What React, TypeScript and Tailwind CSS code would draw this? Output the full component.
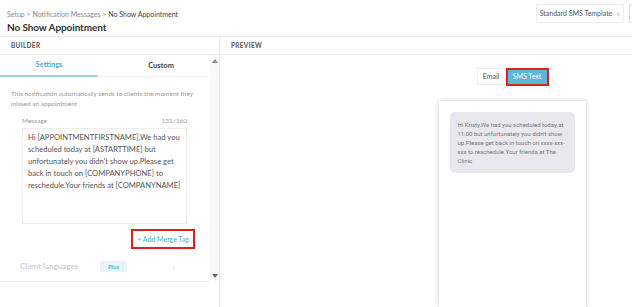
import React from "react";

export default function App() {
  return (
    <div className="w-[632px] h-[307px] overflow-hidden bg-white flex flex-col" style={{ fontFamily: "Lato, 'Open Sans', sans-serif" }}>
      {/* top */}
      <div className="h-[37px] flex justify-between border-b border-[#ececec] shrink-0">
        <div className="pl-[7px] pt-[10px]">
          <div className="text-[7px] leading-[9px] text-[#8a8a8a]">
            Setup &gt; Notification Messages &gt; <span className="text-[#444]">No Show Appointment</span>
          </div>
          <div className="text-[10px] leading-[14px] font-bold text-[#333] mt-[1px] tracking-[-0.1px]">No Show Appointment</div>
        </div>
        <div className="flex items-start pt-[4px] gap-[5px]">
          <div className="h-[19px] w-[88px] border border-[#ececec] rounded-[2px] flex items-center justify-center gap-[4px] text-[7px] text-[#555]">
            Standard SMS Template <span className="text-[#bbb] text-[6px]">∨</span>
          </div>
          <div className="h-[19px] w-[3px] border border-[#dddddd] border-r-0 rounded-l-[2px]" />
        </div>
      </div>
      {/* body */}
      <div className="flex flex-1 min-h-0">
        {/* builder */}
        <div className="w-[220px] border-r border-[#ececec] flex flex-col shrink-0">
          <div className="h-[18px] border-b border-[#ececec] flex items-center pl-[11px] text-[6.5px] font-bold text-[#555] tracking-[0.3px]">BUILDER</div>
          <div className="flex flex-1 min-h-0">
            <div className="w-[211px] flex flex-col">
              <div className="h-[226px] flex flex-col">
                <div className="flex h-[22px] shrink-0">
                  <div className="w-[98px] border-b-[2px] border-[#9ed3e6] flex items-center justify-center text-[7.5px] font-bold text-[#4ab0d6]">Settings</div>
                  <div className="flex-1 border-b border-[#f0f0f0] flex items-center justify-center pl-[14px] text-[7.5px] font-bold text-[#444]">Custom</div>
                </div>
                <div className="px-[11px] pt-[12px] text-[6.5px] leading-[10px] text-[#999]">
                  This notification automatically sends to clients the moment they missed an appointment
                </div>
                <div className="pl-[22px] pr-[23px] mt-[7px]">
                  <div className="flex justify-between text-[6.5px] text-[#999]">
                    <span>Message</span>
                    <span>131/160</span>
                  </div>
                  <div className="mt-[2px] h-[96px] border border-[#eeeeee] pl-[5px] pr-[2px] pt-[2px] text-[7.6px] leading-[12px] text-[#555]" style={{ fontFamily: "Lato, 'Open Sans', sans-serif" }}>
                    Hi [APPOINTMENTFIRSTNAME],We had you scheduled today at [ASTARTTIME] but unfortunately you didn't show up.Please get back in touch on [COMPANYPHONE] to reschedule.Your friends at [COMPANYNAME]
                  </div>
                  <div className="flex justify-end mt-[5px] -mr-[8px]">
                    <div className="border-[2px] border-[#e0201a] h-[20px] w-[64px] flex items-center justify-center text-[7px] text-[#4ab0d6]">+ Add Merge Tag</div>
                  </div>
                </div>
                <div className="flex items-center mt-[11px] pl-[20px] h-[13px]">
                  <span className="w-[80px] text-[8px] font-bold text-[#d0d0d0]">Client languages</span>
                  <span className="w-[27px] h-[11px] rounded-[2px] bg-[#e6f4fa] text-[#5fb6da] text-[6px] font-bold flex items-center justify-center">Plus</span>
                  <span className="ml-[46px] text-[#ccc] text-[8px]">›</span>
                </div>
              </div>
              <div className="border-t border-[#ececec] flex-1" />
            </div>
            {/* scrollbar */}
            <div className="w-[9px] bg-[#fafafa] h-[226px] flex flex-col items-center justify-between pt-[4px] pb-[3px]">
              <div className="w-0 h-0 border-l-[3px] border-r-[3px] border-b-[4px] border-l-transparent border-r-transparent border-b-[#888]" />
              <div className="w-0 h-0 border-l-[3px] border-r-[3px] border-t-[4px] border-l-transparent border-r-transparent border-t-[#666]" />
            </div>
          </div>
        </div>
        {/* preview */}
        <div className="flex-1 flex flex-col min-w-0 overflow-hidden">
          <div className="h-[18px] border-b border-[#ececec] flex items-center pl-[11px] text-[6.5px] font-bold text-[#555] tracking-[0.3px] shrink-0">PREVIEW</div>
          <div className="w-[584px] shrink-0 flex-1 flex flex-col items-center">
            <div className="flex mt-[13px] pl-[1px]">
              <div className="h-[17px] w-[29px] border border-[#eeeeee] flex items-center justify-center text-[7px] text-[#555]">Email</div>
              <div className="h-[18px] w-[43px] border-[2px] border-[#e0201a] bg-[#5ab8dc] flex items-center justify-center text-[7px] text-white -mt-[0.5px]">SMS Text</div>
            </div>
            <div className="mt-[15px] w-[147px] flex-1 bg-white shadow-[0_0_5px_rgba(0,0,0,0.22)] px-[11px] pt-[11px]">
              <div className="bg-[#e8e8ee] rounded-[5px] pl-[8px] pr-[4px] pt-[8px] pb-[8px] text-[6px] leading-[9px] text-[#777]" style={{ fontFamily: "Roboto, 'Open Sans', sans-serif" }}>
                Hi Kristy,We had you scheduled today at 11:00 but unfortunately you didn't show up.Please get back in touch on xxxx-xxx-xxx to reschedule.Your friends at The Clinic
              </div>
            </div>
          </div>
        </div>
      </div>
    </div>
  );
}
